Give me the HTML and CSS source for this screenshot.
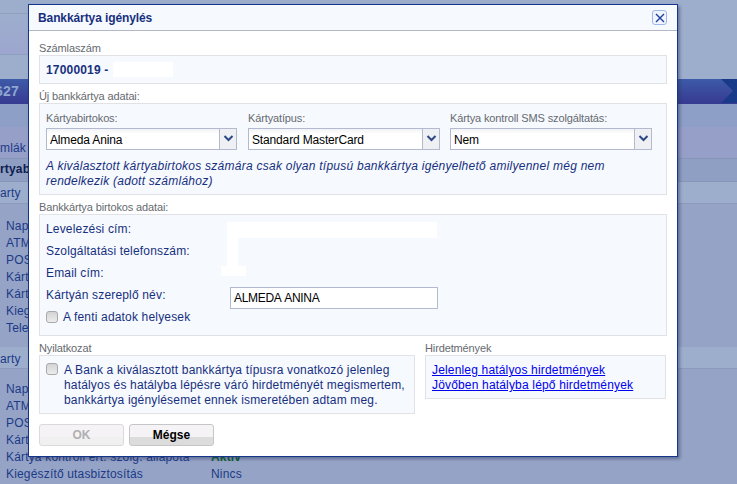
FILE: index.html
```html
<!DOCTYPE html>
<html lang="hu">
<head>
  <meta charset="UTF-8" />
  <meta name="viewport" content="width=device-width, initial-scale=1.0" />
  <title>Bankkártya igénylés</title>
  <link rel="stylesheet" href="styles.css">
</head>
<body>
  <div class="page">
    <div class="bg-header">
      <div class="bg-top"></div>
      <div class="bg-band"></div>
    </div>
    <div class="bg-bar"><b>627</b></div>
    <div class="bg-sub"></div>
    <div class="bg-row bg-tab">mlák</div>
    <div class="bg-row bg-tab bg-active">rtyab</div>
    <div class="bg-head">arty</div>
    <ul class="bg-list bg-list-first">
      <li>Napi</li><li>ATM</li><li>POS</li><li>Kárt</li><li>Kárt</li><li>Kieg</li><li>Tele</li>
    </ul>
    <div class="bg-head bg-head-second">arty</div>
    <ul class="bg-list bg-list-second">
      <li>Napi</li><li>ATM</li><li>POS</li><li>Kárt</li>
      <li class="bg-pair"><span>Kártya kontroll ért. szolg. állapota</span><b class="bg-green">Aktív</b></li>
      <li class="bg-pair"><span>Kiegészítő utasbiztosítás</span><span>Nincs</span></li>
    </ul>
  </div>

  <div class="modal">
    <div class="modal-head">
      <h2>Bankkártya igénylés</h2>
      <button class="close-btn" type="button">
        <svg width="10" height="10" viewBox="0 0 10 10"><path d="M1 1l8 8M9 1l-8 8" stroke="#1f3f9e" stroke-width="1.4" fill="none"/></svg>
      </button>
    </div>
    <div class="modal-body">
      <div class="label">Számlaszám</div>
      <div class="panel account"><b>17000019 -</b><span class="mask-account"></span></div>

      <div class="label">Új bankkártya adatai:</div>
      <div class="panel card-data">
        <div class="selects">
          <div class="field">
            <div class="label">Kártyabirtokos:</div>
            <div class="select"><span>Almeda Anina</span><i class="arrow"><svg width="11" height="7" viewBox="0 0 11 7"><path d="M1.5 1l4 4 4-4" stroke="#2c4a86" stroke-width="2" fill="none"/></svg></i></div>
          </div>
          <div class="field">
            <div class="label">Kártyatípus:</div>
            <div class="select"><span>Standard MasterCard</span><i class="arrow"><svg width="11" height="7" viewBox="0 0 11 7"><path d="M1.5 1l4 4 4-4" stroke="#2c4a86" stroke-width="2" fill="none"/></svg></i></div>
          </div>
          <div class="field">
            <div class="label">Kártya kontroll SMS szolgáltatás:</div>
            <div class="select"><span>Nem</span><i class="arrow"><svg width="11" height="7" viewBox="0 0 11 7"><path d="M1.5 1l4 4 4-4" stroke="#2c4a86" stroke-width="2" fill="none"/></svg></i></div>
          </div>
        </div>
        <p class="hint">A kiválasztott kártyabirtokos számára csak olyan típusú bankkártya igényelhető amilyennel még nem rendelkezik (adott számlához)</p>
      </div>

      <div class="label">Bankkártya birtokos adatai:</div>
      <div class="panel holder">
        <div class="holder-row">Levelezési cím:</div>
        <div class="holder-row">Szolgáltatási telefonszám:</div>
        <div class="holder-row">Email cím:</div>
        <div class="holder-row name-row">
          <span class="name-label">Kártyán szereplő név:</span>
          <div class="text-input">ALMEDA ANINA</div>
        </div>
        <label class="check"><i class="box"></i>A fenti adatok helyesek</label>
        <span class="mask mask-a"></span>
        <span class="mask mask-b"></span>
        <span class="mask mask-c"></span>
      </div>

      <div class="bottom">
        <div class="col-left">
          <div class="label">Nyilatkozat</div>
          <div class="panel declare">
            <i class="box"></i>
            <p>A Bank a kiválasztott bankkártya típusra vonatkozó jelenleg hatályos és hatályba lépésre váró hirdetményét megismertem, bankkártya igénylésemet ennek ismeretében adtam meg.</p>
          </div>
        </div>
        <div class="col-right">
          <div class="label">Hirdetmények</div>
          <div class="panel notices">
            <a href="#">Jelenleg hatályos hirdetmények</a>
            <a href="#">Jövőben hatályba lépő hirdetmények</a>
          </div>
        </div>
      </div>

      <div class="buttons">
        <button class="btn btn-off" type="button">OK</button>
        <button class="btn" type="button">Mégse</button>
      </div>
    </div>
  </div>
</body>
</html>
```

FILE: styles.css
```css
* {
  box-sizing: border-box;
  font-family: 'Liberation Sans', Arial, sans-serif;
}
html, body {
  margin: 0;
  height: 484px;
  overflow: hidden;
}
body {
  position: relative;
  background: #95a3c6;
  font-size: 12px;
  letter-spacing: 0.17px;
  color: #17307e;
}

/* dimmed page behind the dialog */
.page {
  height: 484px;
  overflow: hidden;
}
.bg-header {
  height: 79px;
  background: #9daecd;
}
.bg-top {
  width: 60px;
  height: 14px;
  border-bottom: 1px solid #8e9fc0;
}
.bg-band {
  width: 60px;
  height: 41px;
  background: linear-gradient(#9daecd, #9da6cf);
  border-bottom: 1px solid #8e9fc0;
}
.bg-bar {
  height: 25px;
  background: linear-gradient(#3d5aa8, #373a92);
  color: #8fa6cf;
  font-size: 14px;
  line-height: 25px;
  text-indent: -5px;
  position: relative;
}
.bg-bar:after {
  content: "";
  position: absolute;
  right: 0;
  top: 0;
  box-sizing: content-box;
  width: 4px;
  height: 0;
  background: #183a88;
  background-clip: content-box;
  border-top: 12.5px solid #183a88;
  border-bottom: 12.5px solid #183a88;
  border-left: 12px solid transparent;
}
.bg-sub {
  height: 33px;
  background: linear-gradient(#8d9fc6 70%, #969fc8 70%);
}
.bg-row {
  height: 22px;
  line-height: 22px;
  background: #969fc8;
  border-bottom: 1px solid #8796b8;
  color: #1c3a87;
}
.bg-tab {
  color: #1c3a87;
}
.bg-active {
  height: 23px;
  line-height: 20px;
  background: #8f9fc4;
  font-weight: bold;
  color: #0e1d4f;
}
.bg-head {
  height: 22px;
  line-height: 22px;
  background: #9daecd;
  border-bottom: 1px solid #8d9abd;
  color: #1c3a87;
}
.bg-head-second {
  line-height: 24px;
  margin-top: 10px;
}
.bg-list {
  list-style: none;
  margin: 0;
  padding: 0 6px;
  line-height: 17px;
  color: #1c3a87;
}
.bg-list-first {
  margin-top: 14px;
}
.bg-list-second {
  margin-top: 12px;
}
.bg-pair {
  display: flex;
}
.bg-pair span:first-child {
  width: 205px;
}
.bg-green {
  color: #0d6030;
}

/* dialog */
.modal {
  position: absolute;
  left: 28px;
  top: 4px;
  width: 650px;
  height: 453px;
  background: #fff;
  border: 1px solid #14358c;
  box-shadow: 2px 2px 3px rgba(40, 50, 90, 0.45);
}
.modal-head {
  height: 26px;
  background: #f6f9fe;
  border-bottom: 1px solid #b4b8c4;
  display: flex;
  align-items: center;
  justify-content: space-between;
  padding: 0 10px 0 9px;
}
.modal-head h2 {
  margin: 0;
  font-size: 12px;
  font-weight: bold;
  letter-spacing: -0.1px;
  color: #17307e;
}
.close-btn {
  width: 15px;
  height: 15px;
  padding: 0;
  background: #f0f5ff;
  border: 1px solid #9db8ea;
  border-radius: 3px;
  display: flex;
  align-items: center;
  justify-content: center;
}
.modal-body {
  padding: 10px 10px 0;
}
.label {
  font-size: 11px;
  line-height: 14px;
  letter-spacing: -0.13px;
  color: #666a70;
}
.panel {
  background: #f6f9fe;
  border: 1px solid #e0e2e6;
}
.account {
  height: 29px;
  padding-left: 6px;
  display: flex;
  align-items: center;
  color: #17307e;
  margin-bottom: 5px;
}
.mask-account {
  width: 60px;
  height: 15px;
  margin-left: 5px;
  background: #fff;
}
.card-data {
  height: 92px;
  padding: 7px 6px;
  margin-bottom: 5px;
}
.selects {
  display: flex;
  gap: 11px;
}
.field:nth-child(1) {
  width: 191px;
}
.field:nth-child(2) {
  width: 192px;
}
.field:nth-child(3) {
  width: 202px;
  margin-left: -1px;
}
.select {
  height: 22px;
  margin-top: 3px;
  background: linear-gradient(#f2f3f6, #fff 5px);
  border: 1px solid #b3bad0;
  display: flex;
  align-items: center;
  justify-content: space-between;
  padding-left: 3px;
  font-size: 12px;
  letter-spacing: -0.15px;
  color: #000;
}
.select span {
  padding-top: 1px;
}
.arrow {
  width: 17px;
  height: 20px;
  background: #eff0f3;
  border-left: 1px solid #b3bad0;
  display: flex;
  align-items: center;
  justify-content: center;
  padding-bottom: 2px;
}
.hint {
  max-width: 570px;
  margin: 9px 0 0;
  line-height: 15px;
  font-style: italic;
  letter-spacing: 0.25px;
  color: #17307e;
}
.holder {
  position: relative;
  height: 122px;
  padding: 4px 6px 0;
  margin-bottom: 5px;
}
.holder-row {
  height: 22px;
  line-height: 21px;
}
.name-row {
  display: flex;
  align-items: flex-start;
  height: 25px;
}
.name-label {
  width: 184px;
}
.text-input {
  width: 208px;
  height: 22px;
  line-height: 21px;
  margin-top: 2px;
  background: #fff;
  border: 1px solid #b3bad0;
  padding-left: 3px;
  letter-spacing: -0.3px;
  word-spacing: 1px;
  color: #000;
}
.check {
  display: flex;
  align-items: center;
  gap: 5px;
}
.box {
  flex: none;
  width: 12px;
  height: 12px;
  background: linear-gradient(#d3d3d3, #ececec);
  border: 1px solid #a9a9a9;
  border-radius: 3px;
}
.mask {
  position: absolute;
  background: #fff;
}
.mask-a {
  left: 187px;
  top: 7px;
  width: 210px;
  height: 16px;
}
.mask-b {
  left: 187px;
  top: 23px;
  width: 11px;
  height: 28px;
}
.mask-c {
  left: 181px;
  top: 51px;
  width: 25px;
  height: 10px;
}
.bottom {
  display: flex;
  gap: 10px;
}
.col-left {
  width: 376px;
}
.col-right {
  width: 241px;
}
.declare {
  height: 59px;
  padding: 7px 6px;
  display: flex;
  gap: 6px;
}
.declare p {
  margin: 0;
  line-height: 15px;
}
.notices {
  height: 44px;
  padding: 7px 6px;
  display: flex;
  flex-direction: column;
}
.notices a {
  color: #0000ee;
  line-height: 15px;
}
.buttons {
  display: flex;
  gap: 5px;
  margin-top: 10px;
}
.btn {
  width: 85px;
  height: 22px;
  padding: 0;
  background: linear-gradient(#f6f3f6 60%, #dcdcdc 60%);
  border: 1px solid #c6c6c6;
  border-radius: 3px;
  font-size: 12px;
  font-weight: bold;
  color: #000;
}
.btn-off {
  color: #b0b0b0;
  background: linear-gradient(#f6f3f6 60%, #f0f0f0 60%);
  border-color: #dadada;
}
```
